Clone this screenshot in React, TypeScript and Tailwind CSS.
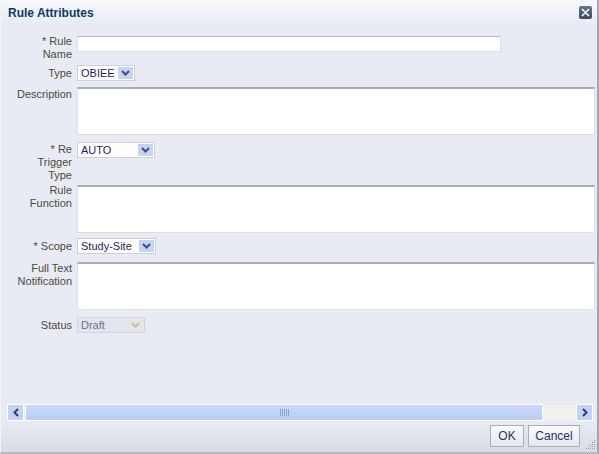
import React from "react";

const font = { fontFamily: '"Liberation Sans", Arial, sans-serif' };

function Chevron({ color = "#35508a" }: { color?: string }) {
  return (
    <svg width="9" height="6" viewBox="0 0 9 6">
      <path d="M1 1 L4.5 4.5 L8 1" stroke={color} strokeWidth="2" fill="none" />
    </svg>
  );
}

function Select({ value, width, disabled }: { value: string; width: string; disabled?: boolean }) {
  return (
    <div
      className={`${width} h-[16px] flex items-center justify-between border ${
        disabled ? "border-[#d3d6dd] bg-[#e3e5ec] text-[#6c6f92]" : "border-[#ccd0d8] bg-white text-[#1e1e5a]"
      } text-[11px] leading-[14px] pl-[3px] pr-[1px]`}
    >
      <span>{value}</span>
      <div
        className={`w-[15px] h-[12px] flex items-center justify-center ${
          disabled ? "bg-[#e6e6de]" : "bg-[#c4d4f2]"
        }`}
      >
        <Chevron color={disabled ? "#c0c0b8" : "#3b4f82"} />
      </div>
    </div>
  );
}

function TextArea({ width = "w-[518px]" }: { width?: string }) {
  return (
    <div className={`${width} h-[48px] bg-white border-t-2 border-t-[#a9adb6] border-x border-x-[#dcdfe5] border-b border-b-[#dcdfe5]`} />
  );
}

function Label({ lines, className = "" }: { lines: string[]; className?: string }) {
  return (
    <div className={`w-[71px] text-right text-[11px] leading-[13px] text-[#4a4a3a] shrink-0 ${className}`}>
      {lines.map((l, i) => (
        <div key={i}>{l}</div>
      ))}
    </div>
  );
}

export default function App() {
  return (
    <div
      style={font}
      className="w-[599px] h-[454px] bg-[#e9ebf4] flex flex-col border-l border-l-[#f4f5f9] border-r-2 border-r-[#a3a7b0] border-b-2 border-b-[#b7bac2] overflow-hidden"
    >
      {/* Title bar */}
      <div className="h-[25px] shrink-0 flex items-center justify-between pl-[7px] pr-[5px] bg-gradient-to-b from-[#f7f8fb] to-[#e9ebf4]">
        <span className="text-[12px] font-bold text-[#0d3b6b] pt-[1px]">Rule Attributes</span>
        <div className="w-[13px] h-[13px] rounded-[2px] bg-gradient-to-b from-[#66758c] to-[#3c4a60] flex items-center justify-center mb-[1px]">
          <svg width="9" height="9" viewBox="0 0 9 9">
            <path d="M1 1 L8 8 M8 1 L1 8" stroke="white" strokeWidth="1.5" />
          </svg>
        </div>
      </div>

      {/* Form */}
      <div className="flex flex-col">
        <div className="flex gap-[5px] mt-[11px]">
          <Label lines={["* Rule", "Name"]} className="-mt-[1px]" />
          <div className="w-[424px] h-[16px] bg-white border-t border-t-[#b5b9c1] border-x border-x-[#dde0e6] border-b border-b-[#dde0e6]" />
        </div>
        <div className="flex gap-[5px] mt-[4px] items-center">
          <Label lines={["Type"]} />
          <Select value="OBIEE" width="w-[58px]" />
        </div>
        <div className="flex gap-[5px] mt-[6px]">
          <Label lines={["Description"]} className="pt-[1px]" />
          <TextArea />
        </div>
        <div className="flex gap-[5px] mt-[7px]">
          <Label lines={["* Re", "Trigger", "Type"]} className="pt-[1px]" />
          <Select value="AUTO" width="w-[78px]" />
        </div>
        <div className="flex gap-[5px] mt-[3px]">
          <Label lines={["Rule", "Function"]} className="-mt-[1px]" />
          <TextArea />
        </div>
        <div className="flex gap-[5px] mt-[5px] items-center">
          <Label lines={["* Scope"]} />
          <Select value="Study-Site" width="w-[79px]" />
        </div>
        <div className="flex gap-[5px] mt-[8px]">
          <Label lines={["Full Text", "Notification"]} />
          <TextArea />
        </div>
        <div className="flex gap-[5px] mt-[7px] items-center">
          <Label lines={["Status"]} />
          <Select value="Draft" width="w-[68px]" disabled />
        </div>
      </div>

      <div className="flex-1" />

      {/* Horizontal scrollbar */}
      <div className="flex items-center h-[17px] pl-[6px]">
        <div className="w-[17px] h-[17px] border border-white bg-[#c3d3f6] flex items-center justify-center">
          <svg width="6" height="9" viewBox="0 0 6 9">
            <path d="M5 1 L1.5 4.5 L5 8" stroke="#2f3f6c" strokeWidth="2" fill="none" />
          </svg>
        </div>
        <div className="ml-[1px] w-[518px] h-[17px] border border-white bg-gradient-to-b from-[#c9d8fa] to-[#bccdf4] flex items-center justify-center">
          <svg width="9" height="7" viewBox="0 0 9 7">
            <path d="M0.5 0 V7 M2.5 0 V7 M4.5 0 V7 M6.5 0 V7 M8.5 0 V7" stroke="#8f9fc6" strokeWidth="1" />
          </svg>
        </div>
        <div className="w-[33px] h-[15px] bg-[#f1f1eb]" />
        <div className="w-[17px] h-[17px] border border-white bg-[#c3d3f6] flex items-center justify-center">
          <svg width="6" height="9" viewBox="0 0 6 9">
            <path d="M1 1 L4.5 4.5 L1 8" stroke="#2f3f6c" strokeWidth="2" fill="none" />
          </svg>
        </div>
      </div>

      {/* Footer */}
      <div className="h-[31px] shrink-0 bg-gradient-to-b from-[#e9ebf4] to-[#d9dce4] flex items-start justify-end pt-[4px] pr-[1px] gap-[4px]">
        <button className="w-[34px] h-[22px] border border-[#a8aeb8] bg-gradient-to-b from-[#fbfbfd] to-[#e4e7ee] text-[12px] text-[#27355f]">
          OK
        </button>
        <button className="w-[52px] h-[22px] border border-[#a8aeb8] bg-gradient-to-b from-[#fbfbfd] to-[#e4e7ee] text-[12px] text-[#27355f]">
          Cancel
        </button>
        <div className="self-end mb-[2px] ml-[1px]">
          <svg width="11" height="11" viewBox="0 0 11 11">
            <g fill="#9aa0ab">
              <rect x="9" y="1" width="1" height="1" />
              <rect x="7" y="3" width="1" height="1" />
              <rect x="9" y="3" width="1" height="1" />
              <rect x="5" y="5" width="1" height="1" />
              <rect x="7" y="5" width="1" height="1" />
              <rect x="9" y="5" width="1" height="1" />
              <rect x="3" y="7" width="1" height="1" />
              <rect x="5" y="7" width="1" height="1" />
              <rect x="7" y="7" width="1" height="1" />
              <rect x="9" y="7" width="1" height="1" />
              <rect x="1" y="9" width="1" height="1" />
              <rect x="3" y="9" width="1" height="1" />
              <rect x="5" y="9" width="1" height="1" />
              <rect x="7" y="9" width="1" height="1" />
              <rect x="9" y="9" width="1" height="1" />
            </g>
          </svg>
        </div>
      </div>
    </div>
  );
}
